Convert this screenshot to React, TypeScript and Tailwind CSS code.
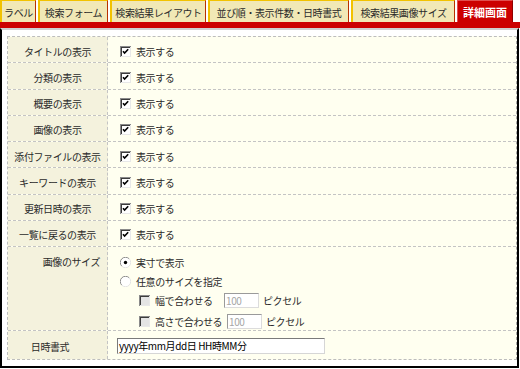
const tabs = [
  { label: "ラベル", w: "w-[36px]" },
  { label: "検索フォーム", w: "w-[70px]" },
  { label: "検索結果レイアウト", w: "w-[96px]" },
  { label: "並び順・表示件数・日時書式", w: "w-[141px]" },
  { label: "検索結果画像サイズ", w: "w-[104px]" },
];

const flags = [
  "タイトルの表示",
  "分類の表示",
  "概要の表示",
  "画像の表示",
  "添付ファイルの表示",
  "キーワードの表示",
  "更新日時の表示",
  "一覧に戻るの表示",
];

function Check({ checked = true, disabled = false }: { checked?: boolean; disabled?: boolean }) {
  return (
    <svg width="11" height="11" viewBox="0 0 11 11" shapeRendering="crispEdges" className="shrink-0">
      <rect x="0" y="0" width="11" height="11" fill={disabled ? "#e4e4e4" : "#ffffff"} />
      <path d="M0.5 10.5V0.5H10.5" stroke="#8a8a8a" fill="none" />
      <path d="M1.5 9.5V1.5H9.5" stroke="#3c3c3c" fill="none" />
      <path d="M0.5 10.5H10.5V0.5" stroke="#e8e8e8" fill="none" />
      {checked && (
        <path d="M3 5.2L4.6 7L8.2 3.2" stroke="#000" strokeWidth="1.6" fill="none" shapeRendering="auto" />
      )}
    </svg>
  );
}

function Radio({ on }: { on?: boolean }) {
  return (
    <svg width="11" height="11" viewBox="0 0 11 11" className="shrink-0">
      <circle cx="5.5" cy="5.5" r="5" fill="#fff" />
      <path d="M1.8 9.2A5 5 0 0 1 9.2 1.8" stroke="#8a8a8a" strokeWidth="1" fill="none" />
      <path d="M9.2 1.8A5 5 0 0 1 1.8 9.2" stroke="#e4e4e4" strokeWidth="1" fill="none" />
      {on && <circle cx="5.5" cy="5.5" r="1.7" fill="#000" />}
    </svg>
  );
}

function Row({ label, children }: { label: string; children: React.ReactNode }) {
  return (
    <div className="flex h-[26.25px] border-b border-dashed border-[#c4c4c4]">
      <div className="w-[100px] shrink-0 flex items-center justify-center pt-[3px] bg-[#f4f2dd] border-r border-dashed border-[#c4c4c4]">
        {label}
      </div>
      <div className="flex-1 flex items-center pl-[12px] pt-[3px] gap-[5px]">{children}</div>
    </div>
  );
}

function SmallBox() {
  return (
    <div className="w-[35px] h-[15px] bg-white border border-t-[#9a9a9a] border-l-[#9a9a9a] border-b-[#dcdcdc] border-r-[#dcdcdc] text-[#a6a6a6] text-[10px] leading-[13px] pl-[1px]">
      100
    </div>
  );
}

export default function App() {
  return (
    <div className="w-[520px] h-[369px] bg-white overflow-hidden font-['Noto_Sans_CJK_JP',sans-serif] text-[10px] tracking-[-0.4px] text-[#2a2a2a]">
      <div className="flex gap-[2px] h-[22px] items-stretch">
        {tabs.map((t) => (
          <div
            key={t.label}
            className={`${t.w} shrink-0 flex items-center justify-center pt-[1px] bg-[#f1e8b6] border-l-2 border-t border-l-[#f2c200] border-t-[#f2c200] border-r border-r-[#b83000] whitespace-nowrap`}
          >
            {t.label}
          </div>
        ))}
        <div className="w-[56px] shrink-0 flex items-center justify-center pt-[1px] bg-[#cc0000] border-l border-t border-[#e05050] border-r border-r-[#900000] text-white font-bold text-[11px] tracking-[0px]">
          詳細画面
        </div>
      </div>
      <div className="h-[6px] bg-[#cc0000]" />
      <div className="w-[519px] h-[340px] border-2 border-black border-t-[#cfcfcf] pt-[6px] pl-[5px] overflow-hidden">
        <div className="w-[510px] border border-dashed border-[#bdbdbd] border-r-solid border-r-[#a8a8a8] bg-[#fffff0]">
          {flags.map((f) => (
            <Row key={f} label={f}>
              <Check />
              <span>表示する</span>
            </Row>
          ))}
          <div className="flex h-[84px] border-b border-dashed border-[#c4c4c4]">
            <div className="w-[100px] shrink-0 bg-[#f4f2dd] border-r border-dashed border-[#c4c4c4] text-right pr-[7px] pt-[8px] leading-[14px]">
              画像のサイズ
            </div>
            <div className="flex-1 flex flex-col pl-[12px] pt-[8px]">
              <div className="flex items-center gap-[5px] h-[14px]">
                <Radio on />
                <span>実寸で表示</span>
              </div>
              <div className="flex items-center gap-[5px] h-[14px] mt-[5px]">
                <Radio />
                <span>任意のサイズを指定</span>
              </div>
              <div className="flex items-center h-[16px] mt-[4px] pl-[19px]">
                <Check checked={false} disabled />
                <span className="ml-[5px] w-[69px]">幅で合わせる</span>
                <SmallBox />
                <span className="ml-[4px]">ピクセル</span>
              </div>
              <div className="flex items-center h-[16px] mt-[5px] pl-[19px]">
                <Check checked={false} disabled />
                <span className="ml-[5px] w-[72px]">高さで合わせる</span>
                <SmallBox />
                <span className="ml-[4px]">ピクセル</span>
              </div>
            </div>
          </div>
          <div className="flex h-[28px]">
            <div className="w-[100px] shrink-0 flex items-center justify-center pt-[3px] pr-[15px] bg-[#f4f2dd] border-r border-dashed border-[#c4c4c4]">
              日時書式
            </div>
            <div className="flex-1 flex items-center pl-[9px] pt-[2px]">
              <div className="w-[208px] h-[16px] bg-white border border-t-[#7a7a7a] border-l-[#7a7a7a] border-b-[#d6d6d6] border-r-[#d6d6d6] text-black text-[10px] leading-[14px] pl-[1px]">
                yyyy年mm月dd日 HH時MM分
              </div>
            </div>
          </div>
        </div>
      </div>
    </div>
  );
}
